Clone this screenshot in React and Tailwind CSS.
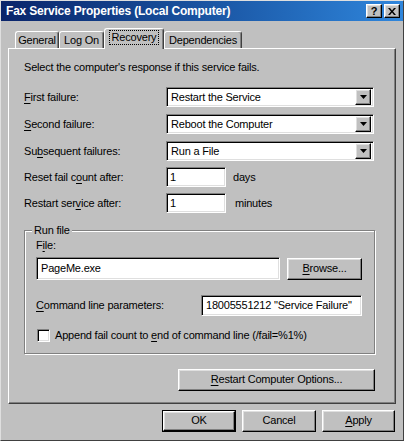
import React from "react";

const raised =
  "border border-t-white border-l-white border-r-black border-b-black shadow-[inset_-1px_-1px_0_#808080,inset_1px_1px_0_#dfdfdf] bg-[#c0c0c0]";
const sunken =
  "border border-t-[#808080] border-l-[#808080] border-r-white border-b-white shadow-[inset_1px_1px_0_#000,inset_-1px_-1px_0_#dfdfdf] bg-white";

const U = ({ children }) => <span className="underline underline-offset-[2px]">{children}</span>;

const Combo = ({ value }) => (
  <div className={`${sunken} w-[208px] h-[20px] flex items-center pl-[4px] pr-[2px]`}>
    <span className="flex-1 leading-[13px]">{value}</span>
    <div className={`${raised} w-[16px] h-[16px] flex items-center justify-center`}>
      <svg width="7" height="4" viewBox="0 0 7 4">
        <path d="M0 0h7L3.5 4z" fill="#000" />
      </svg>
    </div>
  </div>
);

const Tab = ({ label, selected, w }) => (
  <div
    className={`flex items-center justify-center border-l border-t border-white border-r border-r-[#404040] rounded-t-[3px] shadow-[inset_-1px_0_0_#808080] bg-[#c0c0c0] ${
      selected ? "h-[21px] -mb-px relative z-10 pb-[3px]" : "h-[17px]"
    } ${w}`}
  >
    {selected ? (
      <span className="border border-dotted border-black px-[2px] leading-[13px]">{label}</span>
    ) : (
      <span className="leading-[13px]">{label}</span>
    )}
  </div>
);

const Button = ({ children, w, isDefault }) =>
  isDefault ? (
    <div className={`border border-black ${w} h-[22px] flex`}>
      <div className={`${raised} flex-1 flex items-center justify-center`}>{children}</div>
    </div>
  ) : (
    <div className={`${raised} ${w} h-[22px] flex items-center justify-center`}>{children}</div>
  );

export default function App() {
  return (
    <div className="w-[404px] h-[441px] bg-[#c0c0c0] font-['Liberation_Sans',Arial,sans-serif] text-[11px] tracking-[-0.2px] text-black border border-t-[#dfdfdf] border-l-[#dfdfdf] border-r-[#404040] border-b-[#404040] flex flex-col overflow-hidden">
      {/* title bar */}
      <div className="h-[20px] bg-linear-to-r from-[#0a246a] to-[#2f86dc] flex items-center pl-[5px] pr-[3px]">
        <span className="flex-1 text-white font-bold text-[12px] leading-[14px]">
          Fax Service Properties (Local Computer)
        </span>
        <div className="flex gap-[2px]">
          <div className={`${raised} w-[16px] h-[14px] flex items-center justify-center font-bold text-[11px] leading-none`}>?</div>
          <div className={`${raised} w-[16px] h-[14px] flex items-center justify-center`}>
            <svg width="8" height="7" viewBox="0 0 8 7">
              <path d="M0 0h2l2 2.5L6 0h2L5 3.5 8 7H6L4 4.5 2 7H0l3-3.5z" fill="#000" />
            </svg>
          </div>
        </div>
      </div>

      <div className="px-[7px] flex flex-col">
        {/* tabs */}
        <div className="mt-[7px] h-[20px] flex items-end pl-[7px]">
          <Tab label="General" w="w-[44px]" />
          <Tab label="Log On" w="w-[45px]" />
          <Tab label="Recovery" w="w-[60px]" selected />
          <Tab label="Dependencies" w="w-[78px]" />
        </div>

        {/* panel */}
        <div className="w-[388px] border border-t-white border-l-white border-r-[#404040] border-b-[#404040] shadow-[inset_-1px_-1px_0_#808080] pl-[15px] pr-[20px] pb-[12px] flex flex-col">
          <p className="mt-[12px] leading-[13px]">Select the computer's response if this service fails.</p>

          <div className="mt-[13px] flex flex-col gap-[7px]">
            <div className="flex items-center">
              <span className="w-[142px]"><U>F</U>irst failure:</span>
              <Combo value="Restart the Service" />
            </div>
            <div className="flex items-center">
              <span className="w-[142px]"><U>S</U>econd failure:</span>
              <Combo value="Reboot the Computer" />
            </div>
            <div className="flex items-center">
              <span className="w-[142px]">Su<U>b</U>sequent failures:</span>
              <Combo value="Run a File" />
            </div>
          </div>

          <div className="mt-[6px] flex items-center">
            <span className="w-[142px]">Reset fail c<U>o</U>unt after:</span>
            <div className={`${sunken} w-[60px] h-[20px] flex items-center pl-[3px]`}>1</div>
            <span className="ml-[7px]">days</span>
          </div>
          <div className="mt-[6px] flex items-center">
            <span className="w-[142px]">Restart ser<U>v</U>ice after:</span>
            <div className={`${sunken} w-[60px] h-[20px] flex items-center pl-[3px]`}>1</div>
            <span className="ml-[9px]">minutes</span>
          </div>

          {/* group box */}
          <div className="relative mt-[17px] border border-[#808080] shadow-[inset_1px_1px_0_#fff,1px_1px_0_#fff] pl-[11px] pr-[12px] pb-[9px] flex flex-col">
            <span className="absolute -top-[7px] left-[7px] bg-[#c0c0c0] px-[2px] leading-[13px]">Run file</span>
            <span className="mt-[8px] leading-[13px]">F<U>i</U>le:</span>
            <div className="mt-[5px] flex items-center justify-between">
              <div className={`${sunken} w-[244px] h-[23px] flex items-center pl-[4px]`}>PageMe.exe</div>
              <Button w="w-[75px]"><span><U>B</U>rowse...</span></Button>
            </div>
            <div className="mt-[15px] flex items-center justify-between">
              <span><U>C</U>ommand line parameters:</span>
              <div className={`${sunken} w-[161px] h-[21px] flex items-center pl-[4px]`}>18005551212 "Service Failure"</div>
            </div>
            <div className="mt-[11px] flex items-center">
              <div className={`${sunken} w-[13px] h-[13px] ml-[1px]`} />
              <span className="ml-[5px]">Append fail count to <U>e</U>nd of command line (/fail=%1%)</span>
            </div>
          </div>

          <div className="mt-[15px] flex justify-end">
            <Button w="w-[197px]"><span><U>R</U>estart Computer Options...</span></Button>
          </div>
        </div>

        {/* dialog buttons */}
        <div className="mt-[6px] flex justify-end gap-[6px] pr-[1px]">
          <Button w="w-[74px]" isDefault>OK</Button>
          <Button w="w-[74px]">Cancel</Button>
          <Button w="w-[73px]"><span><U>A</U>pply</span></Button>
        </div>
      </div>
    </div>
  );
}
